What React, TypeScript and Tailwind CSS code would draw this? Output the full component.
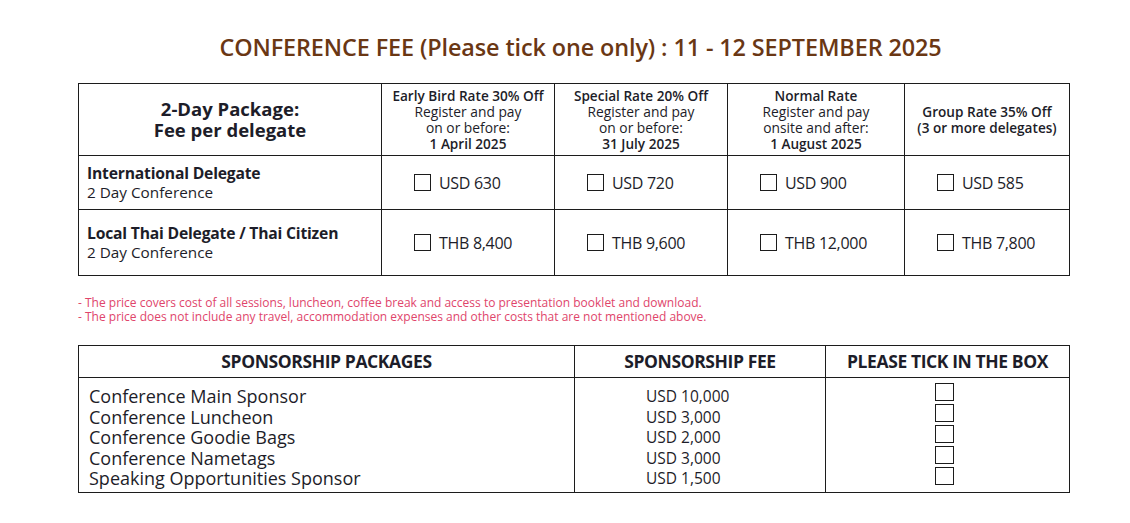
import React from 'react';

type Rate = { usd: string; thb: string };

const rates: Rate[] = [
  { usd: 'USD 630', thb: 'THB 8,400' },
  { usd: 'USD 720', thb: 'THB 9,600' },
  { usd: 'USD 900', thb: 'THB 12,000' },
  { usd: 'USD 585', thb: 'THB 7,800' },
];

const sponsors = [
  { name: 'Conference Main Sponsor', fee: 'USD 10,000' },
  { name: 'Conference Luncheon', fee: 'USD 3,000' },
  { name: 'Conference Goodie Bags', fee: 'USD 2,000' },
  { name: 'Conference Nametags', fee: 'USD 3,000' },
  { name: 'Speaking Opportunities Sponsor', fee: 'USD 1,500' },
];

const Box: React.FC<{ className?: string }> = ({ className = '' }) => (
  <span className={`inline-block border-[1.5px] border-[#1c1c1c] bg-white ${className}`} />
);

const PriceCell: React.FC<{ label: string }> = ({ label }) => (
  <td className="border border-[#1c1c1c] align-middle">
    <div className="flex items-center gap-2 pl-[32px]">
      <Box className="w-[17px] h-[17px]" />
      <span className="text-[16px] tracking-[-0.3px]">{label}</span>
    </div>
  </td>
);

const App: React.FC = () => {
  return (
    <div className="w-[1130px] h-[523px] bg-white text-[#1d1d29] font-['Open_Sans',sans-serif]">
      <div className="w-[991px] ml-[78px] pt-[32px]">
        {/* Title */}
        <h1 className="text-center pl-[14px] text-[23.4px] leading-[30px] font-semibold text-[#6a3714] tracking-[-0.1px]">
          CONFERENCE FEE (Please tick one only) : 11 - 12 SEPTEMBER 2025
        </h1>

        {/* Conference fee table */}
        <table className="mt-[21px] w-full table-fixed border-collapse border border-[#1c1c1c]">
          <colgroup>
            <col className="w-[303px]" />
            <col className="w-[173px]" />
            <col className="w-[173px]" />
            <col className="w-[177px]" />
            <col className="w-[165px]" />
          </colgroup>
          <thead>
            <tr className="h-[72px]">
              <th className="border border-[#1c1c1c] text-center text-[18.5px] leading-[21px] font-bold pb-[2px]">
                2-Day Package:
                <br />
                Fee per delegate
              </th>
              <th className="border border-[#1c1c1c] text-center text-[13.8px] leading-[16px] font-normal">
                <div className="font-semibold text-[13.6px]">Early Bird Rate 30% Off</div>
                <div>Register and pay</div>
                <div>on or before:</div>
                <div className="font-semibold text-[13.6px]">1 April 2025</div>
              </th>
              <th className="border border-[#1c1c1c] text-center text-[13.8px] leading-[16px] font-normal">
                <div className="font-semibold text-[13.6px]">Special Rate 20% Off</div>
                <div>Register and pay</div>
                <div>on or before:</div>
                <div className="font-semibold text-[13.6px]">31 July 2025</div>
              </th>
              <th className="border border-[#1c1c1c] text-center text-[13.8px] leading-[16px] font-normal">
                <div className="font-semibold text-[13.6px]">Normal Rate</div>
                <div>Register and pay</div>
                <div>onsite and after:</div>
                <div className="font-semibold text-[13.6px]">1 August 2025</div>
              </th>
              <th className="border border-[#1c1c1c] text-center text-[13.6px] leading-[16px] font-semibold">
                <div>Group Rate 35% Off</div>
                <div>(3 or more delegates)</div>
              </th>
            </tr>
          </thead>
          <tbody>
            <tr className="h-[54px]">
              <td className="border border-[#1c1c1c] pl-[8px] align-middle">
                <div className="text-[15.7px] leading-[19px] font-bold tracking-[-0.2px]">International Delegate</div>
                <div className="text-[15.3px] leading-[19px]">2 Day Conference</div>
              </td>
              {rates.map((r) => (
                <PriceCell key={r.usd} label={r.usd} />
              ))}
            </tr>
            <tr className="h-[66px]">
              <td className="border border-[#1c1c1c] pl-[8px] align-middle">
                <div className="text-[15.7px] leading-[19px] font-bold tracking-[-0.2px]">Local Thai Delegate / Thai Citizen</div>
                <div className="text-[15.3px] leading-[19px]">2 Day Conference</div>
              </td>
              {rates.map((r) => (
                <PriceCell key={r.thb} label={r.thb} />
              ))}
            </tr>
          </tbody>
        </table>

        {/* Notes */}
        <div className="mt-[20px] text-[12px] leading-[14px] text-[#e0456b]">
          <p>- The price covers cost of all sessions, luncheon, coffee break and access to presentation booklet and download.</p>
          <p>- The price does not include any travel, accommodation expenses and other costs that are not mentioned above.</p>
        </div>

        {/* Sponsorship table */}
        <table className="mt-[21px] w-full table-fixed border-collapse border border-[#1c1c1c]">
          <colgroup>
            <col className="w-[496px]" />
            <col className="w-[251px]" />
            <col className="w-[244px]" />
          </colgroup>
          <thead>
            <tr className="h-[32px] text-[17.5px] font-bold tracking-[-0.4px]">
              <th className="border border-[#1c1c1c] text-center">SPONSORSHIP PACKAGES</th>
              <th className="border border-[#1c1c1c] text-center">SPONSORSHIP FEE</th>
              <th className="border border-[#1c1c1c] text-center">PLEASE TICK IN THE BOX</th>
            </tr>
          </thead>
          <tbody>
            <tr className="h-[115px]">
              <td className="border border-[#1c1c1c] pl-[10px] pt-[8px] pb-[3px] align-top text-[18px] leading-[20.6px]">
                {sponsors.map((s) => (
                  <div key={s.name}>{s.name}</div>
                ))}
              </td>
              <td className="border border-[#1c1c1c] pl-[71px] pt-[8px] pb-[3px] align-top text-[15.5px] leading-[20.6px]">
                {sponsors.map((s, i) => (
                  <div key={i}>{s.fee}</div>
                ))}
              </td>
              <td className="border border-[#1c1c1c] pt-[5px] align-top">
                <div className="flex flex-col items-center gap-[3px] pr-[6px]">
                  {sponsors.map((_, i) => (
                    <Box key={i} className="w-[19px] h-[18px]" />
                  ))}
                </div>
              </td>
            </tr>
          </tbody>
        </table>
      </div>
    </div>
  );
};

export default App;
